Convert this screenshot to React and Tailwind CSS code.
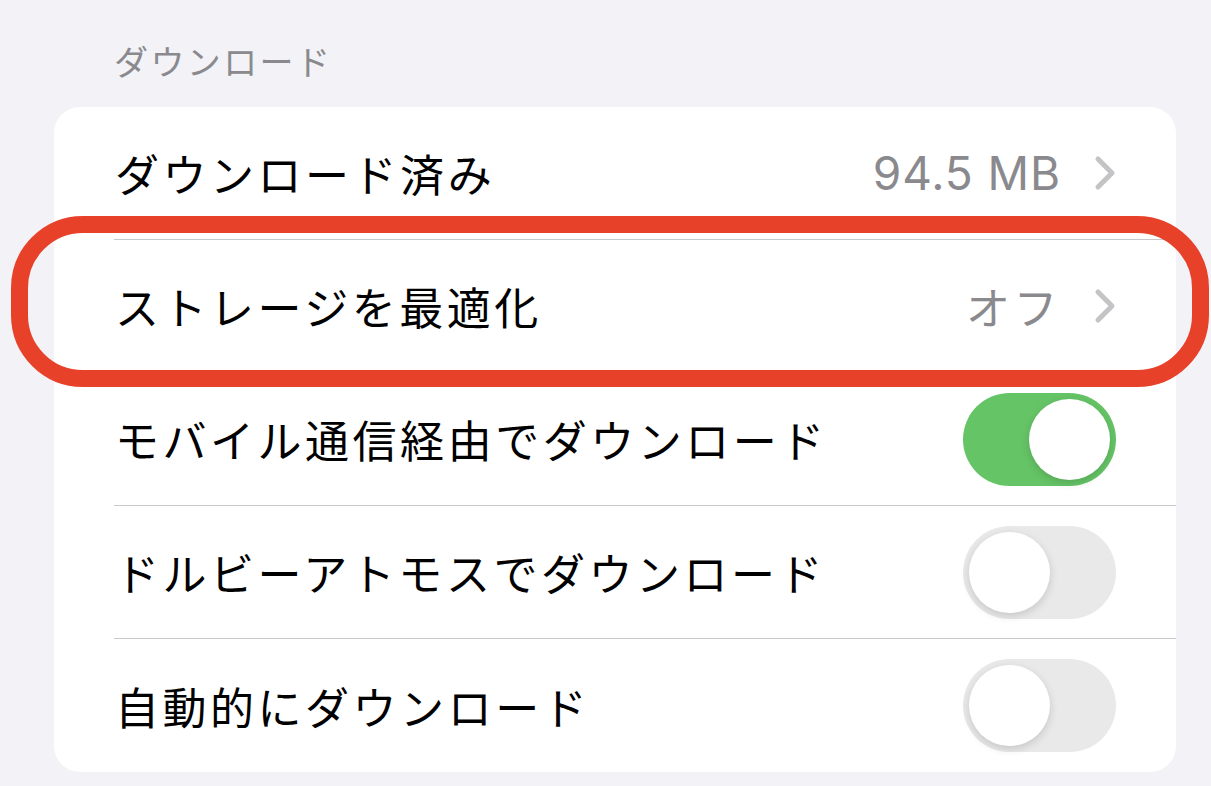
import React from "react";

const jp = { fontFamily: '"Noto Sans CJK JP", "Noto Sans", sans-serif' };

function Chevron() {
  return (
    <svg width="22" height="36" viewBox="0 0 22 36" className="ml-[33px]">
      <polyline points="4,4 18,18 4,32" fill="none" stroke="#c4c4c7" strokeWidth="5" strokeLinecap="round" strokeLinejoin="round" />
    </svg>
  );
}

function Toggle({ on }) {
  return (
    <div
      className={`w-[153px] h-[93px] rounded-full flex items-center px-[6px] ${on ? "bg-[#65c466] justify-end" : "bg-[#e9e9ea] justify-start"}`}
    >
      <div className="w-[81px] h-[81px] rounded-full bg-white shadow-[0_3px_8px_rgba(0,0,0,0.15)]" />
    </div>
  );
}

function Row({ label, right, last }) {
  return (
    <div className="pl-[60px]">
      <div className={`h-[133px] flex items-center pr-[60px] ${last ? "" : "border-b border-[#c8c8cc]"}`}>
        <div className="flex-1 text-[44px] text-black leading-none pl-[1px] tracking-[0.08em]" style={jp}>{label}</div>
        {right}
      </div>
    </div>
  );
}

export default function App() {
  return (
    <div className="w-[1211px] h-[786px] bg-[#f2f2f7] relative overflow-hidden" style={jp}>
      <div className="h-[107px] pl-[114px] pt-[44px] text-[34px] leading-none text-[#8a8a8e] tracking-[0.07em]">ダウンロード</div>
      <div className="ml-[54px] mr-[35px] bg-white rounded-[26px] overflow-hidden">
        <Row
          label="ダウンロード済み"
          right={
            <div className="flex items-center">
              <span className="text-[46px] leading-none text-[#8a8a8e] tracking-[0.02em]" style={{ fontFamily: 'Inter, "Noto Sans", sans-serif' }}>94.5 MB</span>
              <Chevron />
            </div>
          }
        />
        <Row
          label="ストレージを最適化"
          right={
            <div className="flex items-center">
              <span className="text-[44px] leading-none text-[#8a8a8e] tracking-[0.08em]">オフ</span>
              <Chevron />
            </div>
          }
        />
        <Row label="モバイル通信経由でダウンロード" right={<Toggle on />} />
        <Row label="ドルビーアトモスでダウンロード" right={<Toggle />} />
        <Row label="自動的にダウンロード" right={<Toggle />} last />
      </div>
      <div className="absolute left-[11px] top-[216px] w-[1198px] h-[171px] border-[17px] border-[#e8412a] rounded-[72px]" />
    </div>
  );
}
